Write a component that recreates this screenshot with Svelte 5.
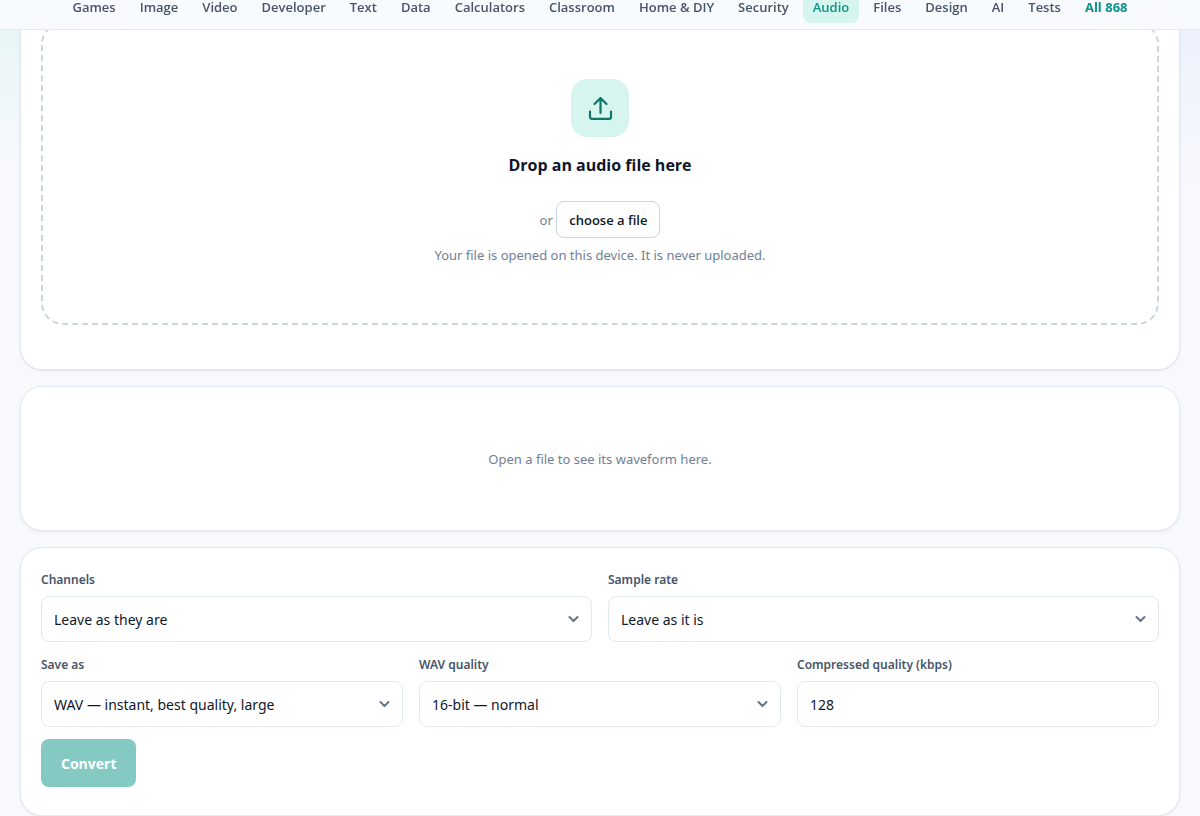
<script lang="ts">
	const categories = [
		{ slug: 'games', name: 'Games' },
		{ slug: 'image', name: 'Image' },
		{ slug: 'video', name: 'Video' },
		{ slug: 'developer', name: 'Developer' },
		{ slug: 'text', name: 'Text' },
		{ slug: 'data', name: 'Data' },
		{ slug: 'calculators', name: 'Calculators' },
		{ slug: 'classroom', name: 'Classroom' },
		{ slug: 'home-diy', name: 'Home & DIY' },
		{ slug: 'security', name: 'Security' },
		{ slug: 'audio', name: 'Audio' },
		{ slug: 'files', name: 'Files' },
		{ slug: 'design', name: 'Design' },
		{ slug: 'ai', name: 'AI' },
		{ slug: 'tests', name: 'Tests' },
	];
	const current = 'audio';

	let picker: HTMLInputElement;
	let file = $state<File | null>(null);
	let kbps = $state('128');
</script>

<header>
	<nav>
		{#each categories as cat}
			<a href="/{cat.slug}" class:active={cat.slug === current}>{cat.name}</a>
		{/each}
		<a href="/all" class="all">All 868</a>
	</nav>
</header>

<main>
	<section class="card open">
		<div class="drop">
			<span class="badge">
				<svg width="28" height="28" viewBox="0 0 28 28" fill="none" stroke="currentColor" stroke-width="2.200" stroke-linecap="round" stroke-linejoin="round" aria-hidden="true">
					<path d="M14.500 19V4M8.500 10l6-6 6 6M4 17.500V23a1.800 1.800 0 0 0 1.800 1.800h17.400A1.800 1.800 0 0 0 25 23v-5.500" />
				</svg>
			</span>
			<h2>Drop an audio file here</h2>
			<p class="pick">or <button type="button" class="choose" onclick={() => picker.click()}>choose a file</button></p>
			<p class="note">Your file is opened on this device. It is never uploaded.</p>
			<input type="file" accept="audio/*" hidden bind:this={picker} onchange={() => file = picker.files?.[0] ?? null} />
		</div>
	</section>

	<section class="card wave">
		<p>Open a file to see its waveform here.</p>
	</section>

	<form class="card settings" onsubmit={(e) => e.preventDefault()}>
		<div class="row two">
			<div class="field">
				<label for="channels">Channels</label>
				<select id="channels">
					<option>Leave as they are</option>
					<option>Mono</option>
					<option>Stereo</option>
				</select>
			</div>
			<div class="field">
				<label for="rate">Sample rate</label>
				<select id="rate">
					<option>Leave as it is</option>
					<option>44100 Hz</option>
					<option>48000 Hz</option>
				</select>
			</div>
		</div>
		<div class="row three">
			<div class="field">
				<label for="format">Save as</label>
				<select id="format">
					<option>WAV — instant, best quality, large</option>
				</select>
			</div>
			<div class="field">
				<label for="depth">WAV quality</label>
				<select id="depth">
					<option>16-bit — normal</option>
				</select>
			</div>
			<div class="field">
				<label for="kbps">Compressed quality (kbps)</label>
				<input id="kbps" type="text" inputmode="numeric" bind:value={kbps} />
			</div>
		</div>
		<button class="convert" disabled={!file}>Convert</button>
	</form>
</main>

<style>
	:global(body) {
		background:
			radial-gradient(circle at 0 0, rgba(20, 184, 166, .08), transparent 180px),
			radial-gradient(circle at 100% 0, rgba(99, 132, 241, .08), transparent 200px),
			#f7f9fd;
		color: #0f172a;
		font-family: "Noto Sans", "Open Sans", sans-serif;
	}

	header {
		position: sticky; top: 0; z-index: 10;
		background: rgba(248, 250, 254, .88);
		backdrop-filter: blur(12px);
		border-bottom: 1px solid #e2e8f0;
	}
	nav { display: flex; justify-content: center; gap: 4px; padding-bottom: 6px; }
	nav a {
		padding: 0 10px 9px; border-radius: 0 0 8px 8px;
		font-family: "Open Sans", sans-serif;
		font-size: 13px; line-height: 14px; font-weight: 600;
		color: #475569; text-decoration: none; white-space: nowrap;
	}
	nav a.active { background: #d5f5ee; color: #0d9488; }
	nav a.all { color: #0d9488; font-weight: 700; }

	main { display: flex; flex-direction: column; gap: 16px; padding: 0 20px; }

	.card {
		background: #fff;
		border: 1px solid #e2e8f0; border-radius: 22px;
		box-shadow: 0 1px 2px rgba(15, 23, 42, .08);
	}

	.open { margin-top: -8px; border-top: 0; border-radius: 0 0 22px 22px; padding: 0 20px 44px; }
	.drop {
		display: flex; flex-direction: column; align-items: center;
		padding: 55px 20px 57px;
		border: 2px dashed #cbd5e1; border-radius: 22px;
		text-align: center;
	}
	.badge {
		display: grid; place-items: center;
		width: 58px; height: 58px; border-radius: 16px;
		background: #d5f5ee; color: #0f766e;
	}
	h2 {
		margin: 14px 0 22px;
		font-family: "Open Sans", sans-serif;
		font-size: 16px; line-height: 28px; font-weight: 700;
	}
	.pick, .note { margin: 0; font-size: 13px; color: #708096; }
	.choose {
		height: 37px; padding: 0 12px;
		background: #fff; border: 1px solid #cbd5e1; border-radius: 8px;
		color: #0f172a;
		font-family: "Open Sans", sans-serif; font-size: 13px; font-weight: 600;
	}
	.note { margin-top: 6px; line-height: 22px; }

	.wave { display: grid; place-items: center; min-height: 143px; }
	.wave p { margin: 0; font-size: 13px; line-height: 22px; color: #708096; }

	.settings { display: flex; flex-direction: column; gap: 12px; padding: 21px 20px 28px; }
	.row { display: grid; gap: 16px; }
	.two { grid-template-columns: 1fr 1fr; }
	.three { grid-template-columns: 1fr 1fr 1fr; }
	.field { display: flex; flex-direction: column; gap: 6px; min-width: 0; }
	label { font-size: 12px; line-height: 21px; font-weight: 600; color: #475569; }
	select, .field input {
		box-sizing: border-box; width: 100%; height: 46px; padding: 0 12px;
		border: 1px solid #e2e8f0; border-radius: 8px;
		background: #fff; color: #0f172a;
		font-family: inherit; font-size: 14px;
	}
	select {
		appearance: none; padding-right: 36px;
		background: #fff url("data:image/svg+xml,%3Csvg xmlns='http://www.w3.org/2000/svg' width='12' height='8' fill='none' stroke='%2364748b' stroke-width='2' stroke-linecap='round' stroke-linejoin='round'%3E%3Cpath d='M2.500 2l4 4 4-4'/%3E%3C/svg%3E") no-repeat right 12px center;
	}
	.convert {
		align-self: flex-start; height: 48px; padding: 0 20px;
		border: 0; border-radius: 8px;
		background: #0d9488; color: #fff;
		font-family: "Open Sans", sans-serif; font-size: 14px; font-weight: 700;
	}
	.convert:disabled { opacity: .5; }

	@media (max-width: 720px) {
		nav { justify-content: flex-start; overflow-x: auto; }
		.two, .three { grid-template-columns: 1fr; }
	}
</style>
